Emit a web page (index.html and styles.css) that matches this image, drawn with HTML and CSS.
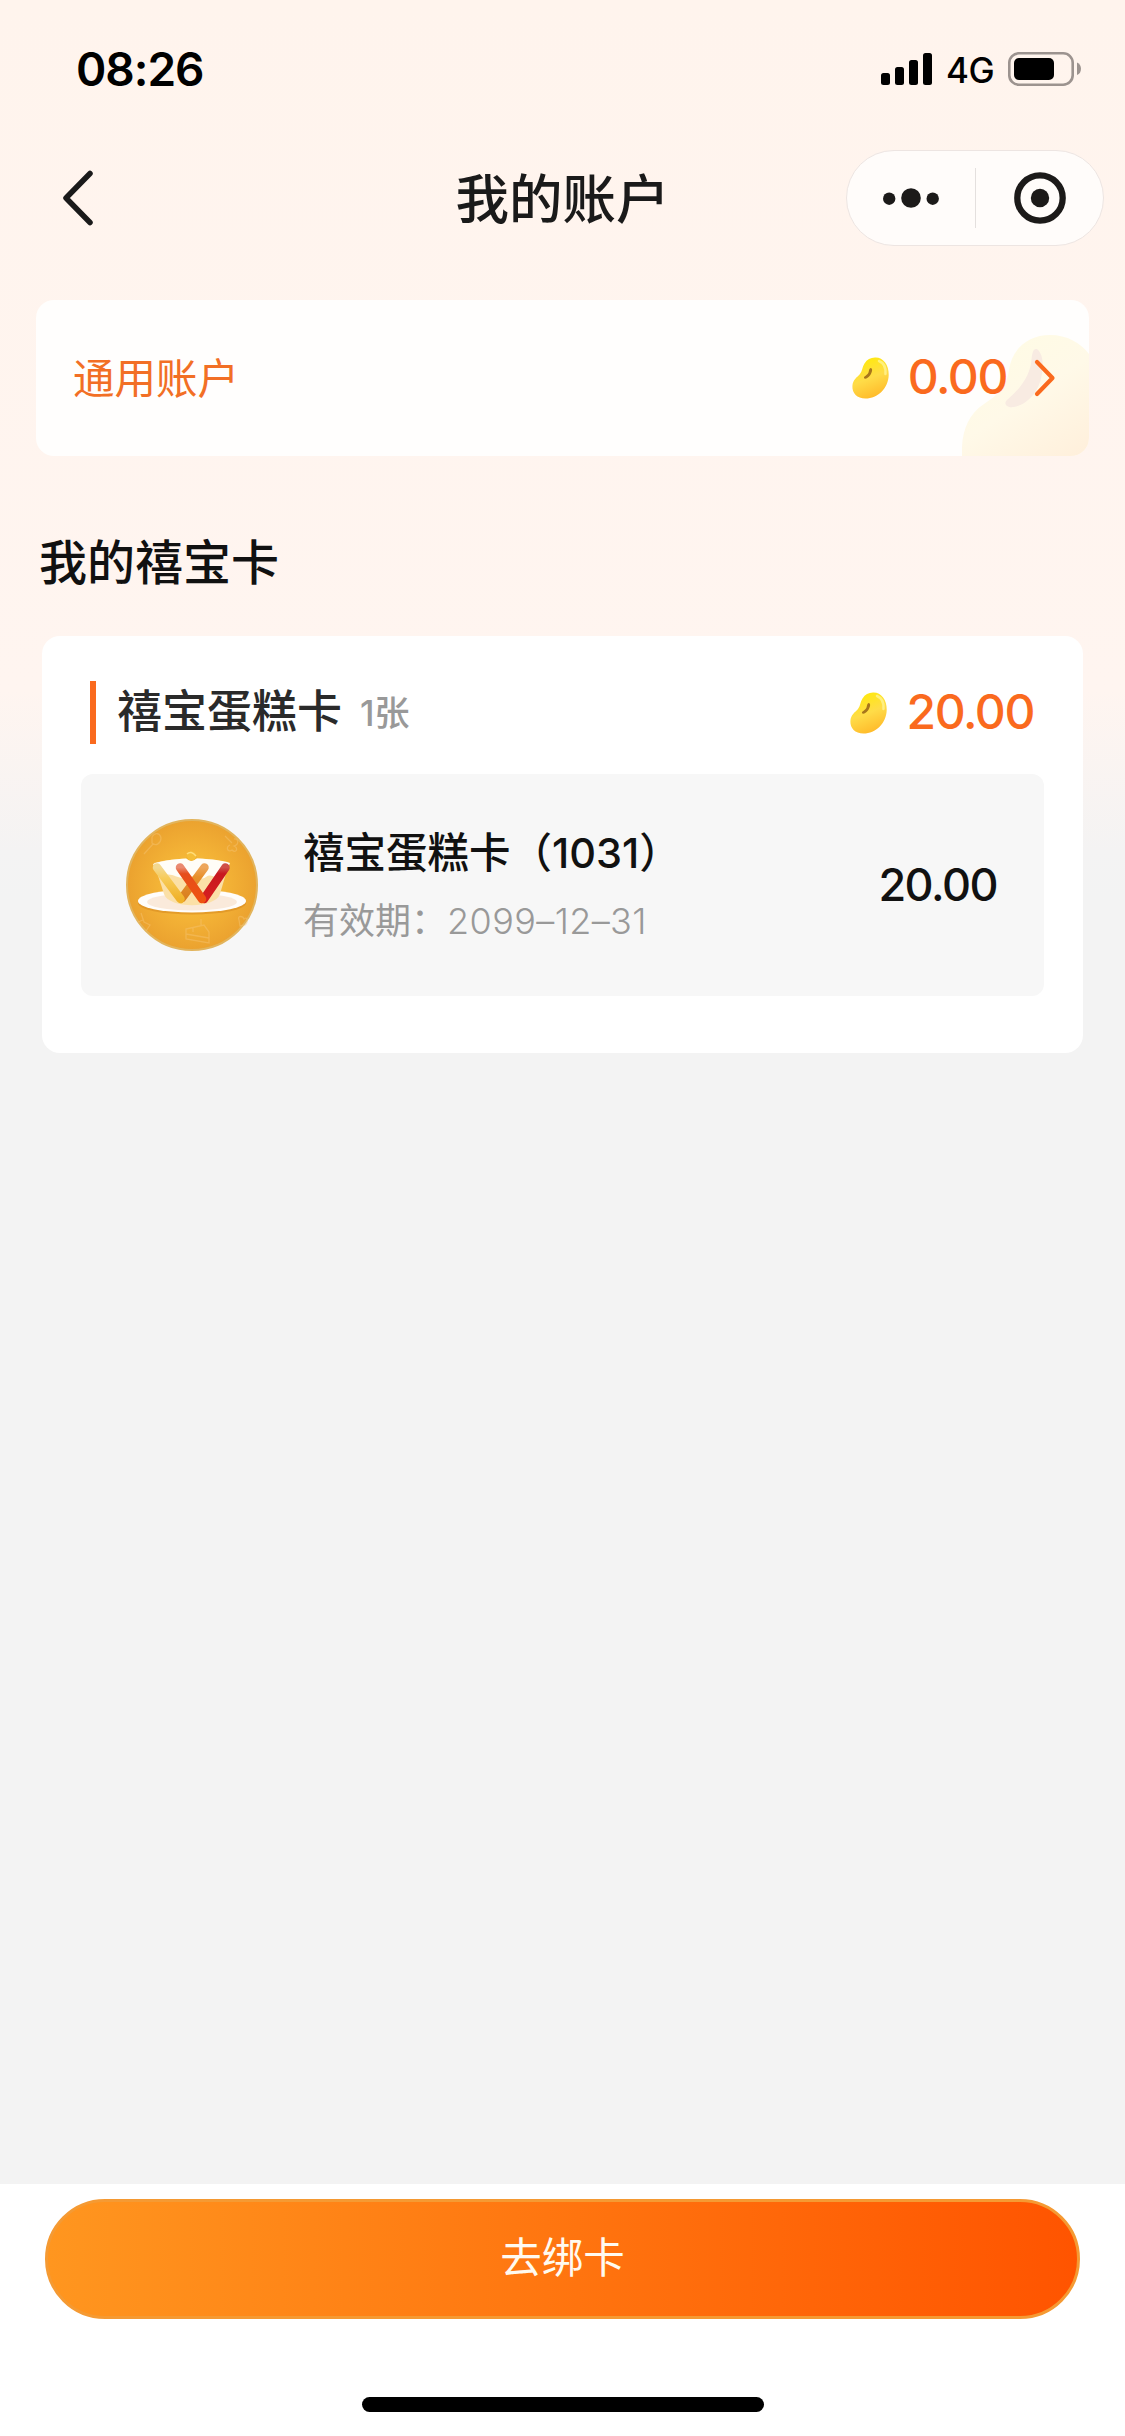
FILE: index.html
```html
<!DOCTYPE html>
<html lang="zh-CN">
<head>
<meta charset="utf-8">
<title>我的账户</title>
<link rel="stylesheet" href="styles.css">
</head>
<body>
<svg class="defs" width="0" height="0" aria-hidden="true">
  <defs>
    <linearGradient id="beanFill" x1="0.3" y1="0" x2="0.65" y2="1">
      <stop offset="0" stop-color="#ffea08"/>
      <stop offset="0.5" stop-color="#ffdc48"/>
      <stop offset="1" stop-color="#ffb828"/>
    </linearGradient>
    <symbol id="bean" viewBox="0 0 37 42">
      <path d="M23 .6C31 .2 37 8 36.700 18C36.400 31 26 41.500 13.500 41.500C5 41.500 0 36 .4 29C.8 22.500 5 20.500 8 17C10.500 14 10 10 12.500 6.500C15 2.500 18.500 .8 23 .6Z" fill="url(#beanFill)"/>
      <path d="M27 4C32 6 34 11 33.500 17" fill="none" stroke="#fff6a0" stroke-width="2.500" stroke-linecap="round" opacity=".7"/>
      <path d="M18.500 11C21 11 20.500 15 18 18.500C16 21.500 12.500 22.500 12 21C11.500 19 15.500 18.500 16.500 15.500C17.200 13.500 17 11.500 18.500 11Z" fill="#a8761c"/>
    </symbol>
  </defs>
</svg>
<div class="page">
  <header class="status">
    <span class="time">08:26</span>
    <div class="indicators">
      <svg width="51" height="32" viewBox="0 0 51 32"><rect y="20" width="9" height="12" rx="2.500"/><rect x="14" y="14" width="9" height="18" rx="2.500"/><rect x="28" y="7" width="9" height="25" rx="2.500"/><rect x="42" width="9" height="32" rx="2.500"/></svg>
      <span class="network">4G</span>
      <svg width="74" height="34" viewBox="0 0 74 34"><rect x="1.300" y="1.300" width="63.400" height="31.400" rx="9.500" fill="none" stroke="#9c938f" stroke-width="2.600"/><rect x="6" y="6" width="40" height="22" rx="5"/><path d="M69 10.500C74.300 12 74.300 21.500 69 23Z" fill="#9c938f"/></svg>
    </div>
  </header>
  <nav class="nav">
    <svg class="back" width="32" height="56" viewBox="0 0 32 56"><path d="M28 3.500L4 28L28 52.500" fill="none" stroke="#1a1a1a" stroke-width="5.500" stroke-linecap="round" stroke-linejoin="round"/></svg>
    <h1 class="title">我的账户</h1>
    <div class="capsule">
      <svg width="56" height="20" viewBox="0 0 56 20"><circle cx="6.200" cy="10.700" r="6.200"/><circle cx="28" cy="10" r="9.800"/><circle cx="49.700" cy="10.700" r="6.200"/></svg>
      <i class="divider"></i>
      <svg width="52" height="52" viewBox="0 0 52 52"><circle cx="26" cy="26" r="22.700" fill="none" stroke="#1c1a19" stroke-width="6.300"/><circle cx="26" cy="26" r="9.200"/></svg>
    </div>
  </nav>
  <main class="content">
    <section class="general">
      <svg class="watermark" width="127" height="121" viewBox="0 0 127 121">
        <defs>
          <linearGradient id="paleBean" x1="0.2" y1="0" x2="0.9" y2="1"><stop offset="0" stop-color="#fffce4"/><stop offset="0.5" stop-color="#fff9e8"/><stop offset="1" stop-color="#fff0dc"/></linearGradient>
        </defs>
        <path d="M0 121C-1 99 5 80 22 69C36 60 45 51 47 35C50 13 67 0 88 0C105 0 119 8 127 19V121Z" fill="url(#paleBean)"/>
        <path d="M75 14C80 18 82 27 80 38C78 55 67 69 52 72C45 73 41 69 45 65C56 56 66 44 69 29C70 21 70 13 75 14Z" fill="#f8ebe2"/>
      </svg>
      <span class="general-name">通用账户</span>
      <div class="balance">
        <svg class="bean" width="37" height="42"><use href="#bean"/></svg>
        <span class="amount">0.00</span>
        <svg class="arrow" width="22" height="38" viewBox="0 0 22 38"><path d="M3 3L18.500 19L3 35" fill="none" stroke="#fa6a1e" stroke-width="4.200" stroke-linecap="round" stroke-linejoin="round"/></svg>
      </div>
    </section>
    <h2 class="heading">我的禧宝卡</h2>
    <section class="group">
      <div class="group-head">
        <i class="marker"></i>
        <span class="group-name">禧宝蛋糕卡</span>
        <span class="count">1张</span>
        <div class="balance">
          <svg class="bean" width="37" height="42"><use href="#bean"/></svg>
          <span class="amount">20.00</span>
        </div>
      </div>
      <article class="card">
        <svg class="avatar" width="132" height="132" viewBox="0 0 132 132">
          <defs>
            <radialGradient id="disc"><stop offset="0" stop-color="#fac83c"/><stop offset="0.55" stop-color="#f3b236"/><stop offset="1" stop-color="#eba22f"/></radialGradient>
            <linearGradient id="yellowBar" x1="0" y1="0" x2="0" y2="1"><stop offset="0" stop-color="#f3d88f"/><stop offset="0.35" stop-color="#f7cb58"/><stop offset="1" stop-color="#f0b22a"/></linearGradient>
            <linearGradient id="orangeBar" x1="0" y1="0" x2="0" y2="1"><stop offset="0" stop-color="#ea8a70"/><stop offset="0.2" stop-color="#e64e1c"/><stop offset="1" stop-color="#ee5210"/></linearGradient>
            <linearGradient id="redBar" x1="0" y1="0" x2="0" y2="1"><stop offset="0" stop-color="#d05048"/><stop offset="0.2" stop-color="#c8181f"/><stop offset="1" stop-color="#d61f20"/></linearGradient>
            <linearGradient id="amberBar" x1="0" y1="0" x2="0" y2="1"><stop offset="0" stop-color="#eda65a"/><stop offset="0.3" stop-color="#e8902c"/><stop offset="1" stop-color="#d97f20"/></linearGradient>
          </defs>
          <circle cx="66" cy="66" r="65" fill="url(#disc)" stroke="#e2b45c" stroke-width="2"/>
          <g fill="none" stroke="#f7c573" stroke-width="1.300" opacity=".45">
            <path d="M18 35L27 25M26 18C29 13 34 14 35 19C35 24 30 28 26 24Z"/>
            <path d="M99 17L106 24M108 20C112 19 114 25 108 27C113 29 110 35 106 31C102 34 99 28 104 26"/>
            <path d="M60 110L78 106L83 113V124L60 120ZM60 115L83 119M75 107V100M67 109V113"/>
            <path d="M15 94L18 103L24 106L20 112M17 101L12 103M113 101C111 96 117 97 118 100C121 97 123 102 119 106L114 107Z"/>
          </g>
          <ellipse cx="66" cy="84" rx="54" ry="11.500" fill="#d98c22" opacity=".6"/>
          <ellipse cx="66" cy="82" rx="54" ry="11.500" fill="#fffdfb"/>
          <ellipse cx="66" cy="83" rx="45" ry="8.500" fill="#faeadb"/>
          <path d="M28 44C50 38 82 38 103 44L94 75C89 90 43 90 38 75Z" fill="#fbe0a7"/>
          <path d="M27 45C48 38 84 38 104 44L98 58C91 63 87 53 80 58C73 63 67 54 60 58C52 62 46 51 34 58Z" fill="#fffdf7"/>
          <path d="M60 39Q65 45 71 39L70 36H62Z" fill="#efb02e"/>
          <circle cx="65.500" cy="37" r="4.500" fill="#f5bd38"/><path d="M61 35Q65 31 70 37" fill="none" stroke="#ffdc79" stroke-width="1.500"/>
          <g fill="none" stroke-width="8.500" stroke-linecap="round">
            <path d="M78.500 48.500L56 79" stroke="url(#amberBar)"/>
            <path d="M31 48.500L54.500 80" stroke="url(#yellowBar)"/>
            <path d="M99.500 48.500L78 80" stroke="url(#redBar)"/>
            <path d="M54 48.500L76 80" stroke="url(#orangeBar)"/>
          </g>
        </svg>
        <div class="card-info">
          <span class="card-name">禧宝蛋糕卡（1031）</span>
          <span class="expiry">有效期：<span class="date">2099–12–31</span></span>
        </div>
        <span class="card-amount">20.00</span>
      </article>
    </section>
  </main>
  <footer class="footer">
    <button class="bind" type="button">去绑卡</button>
    <i class="home"></i>
  </footer>
</div>
</body>
</html>
```
FILE: styles.css
```css
* { box-sizing: border-box; }
body { margin: 0; font-family: Inter, "Noto Sans CJK SC", sans-serif; }
h1, h2 { margin: 0; }
i { display: block; }
svg { display: block; flex: none; }
.defs { position: absolute; }

.page {
  width: 1125px;
  height: 2436px;
  display: flex;
  flex-direction: column;
  background: linear-gradient(#fff4ed 0, #fff5f0 690px, #f4f3f3 850px, #f3f3f3 900px);
}

.status {
  height: 138px;
  padding: 0 43px 0 76px;
  display: flex;
  justify-content: space-between;
  align-items: center;
}
.time { font-size: 46px; font-weight: 600; line-height: 56px; letter-spacing: -1px; }
.indicators { display: flex; align-items: center; }
.network { width: 76px; padding: 2px 0 0 14px; font-size: 35px; font-weight: 500; line-height: 40px; letter-spacing: -0.5px; }

.nav {
  height: 120px;
  display: grid;
  grid-template-columns: 279px 1fr 279px;
  align-items: center;
}
.back { margin-left: 62px; }
.title { padding-top: 3px; font-size: 53.500px; font-weight: 500; line-height: 70px; text-align: center; color: #1a1a1a; }
.capsule {
  width: 258px;
  height: 96px;
  padding: 0 37px 0 36px;
  display: flex;
  align-items: center;
  justify-content: space-between;
  border: 1px solid #ede5e2;
  border-radius: 48px;
  background: #fffcfa;
  fill: #1c1a19;
}
.divider { width: 1px; height: 60px; margin-right: 2px; background: #e4e0de; }

.content { flex: 1; display: flex; flex-direction: column; padding: 42px 36px 0; }
.general {
  position: relative;
  height: 156px;
  padding: 0 33px 0 37px;
  display: flex;
  align-items: center;
  justify-content: space-between;
  border-radius: 18px;
  background: #fffefd;
  overflow: hidden;
}
.watermark { position: absolute; right: 0; bottom: 0; }
.general-name, .general .balance { position: relative; }
.general-name { padding-top: 1px; font-size: 41.500px; line-height: 56px; color: #f26f25; }
.balance { display: flex; align-items: center; }
.amount { margin-left: 19px; padding-bottom: 2px; font-size: 48px; font-weight: 500; line-height: 54px; letter-spacing: -1.400px; color: #fa6a1e; }
.arrow { margin-left: 27px; }
.heading { margin: 72px 0 0 3px; font-size: 48px; font-weight: 500; line-height: 70px; color: #111; }

.group {
  height: 417px;
  margin: 38px 6px 0;
  padding: 45px 39px 0;
  border-radius: 18px;
  background: #fff;
}
.group-head { height: 63px; padding: 0 10px 0 9px; display: flex; align-items: center; }
.group-head .balance { margin-left: auto; }
.marker { width: 6px; height: 63px; margin-right: 21px; background: #fa6a1e; }
.group-name { padding-bottom: 2px; font-size: 45px; font-weight: 500; line-height: 60px; color: #2a2a2a; }
.count { margin-left: 18px; font-size: 35px; font-weight: 500; line-height: 48px; color: #999; }

.card {
  height: 222px;
  margin-top: 30px;
  padding: 0 47px 0 45px;
  display: flex;
  align-items: center;
  border-radius: 12px;
  background: #f7f7f7;
}
.card-info { margin-left: 45px; padding-top: 3px; flex: 1; display: flex; flex-direction: column; gap: 8px; }
.card-name { font-size: 41.500px; font-weight: 500; line-height: 60px; color: #111; }
.expiry { font-size: 36px; line-height: 60px; color: #999; }
.date { font-weight: 350; letter-spacing: 0.4px; }
.card-amount { font-size: 45px; font-weight: 500; line-height: 56px; letter-spacing: -1.500px; color: #111; }

.footer {
  height: 252px;
  padding: 15px 45px 0;
  display: flex;
  flex-direction: column;
  align-items: center;
  background: #fff;
}
.bind {
  width: 100%;
  height: 120px;
  padding: 0 0 3px;
  border: 3px solid #f59a33;
  border-radius: 60px;
  background: linear-gradient(90deg, #ff961f, #ff5400);
  color: #fffaf0;
  font: 400 41.500px/56px Inter, "Noto Sans CJK SC", sans-serif;
}
.home { width: 402px; height: 15px; margin-top: 78px; border-radius: 8px; background: #000; }
```
